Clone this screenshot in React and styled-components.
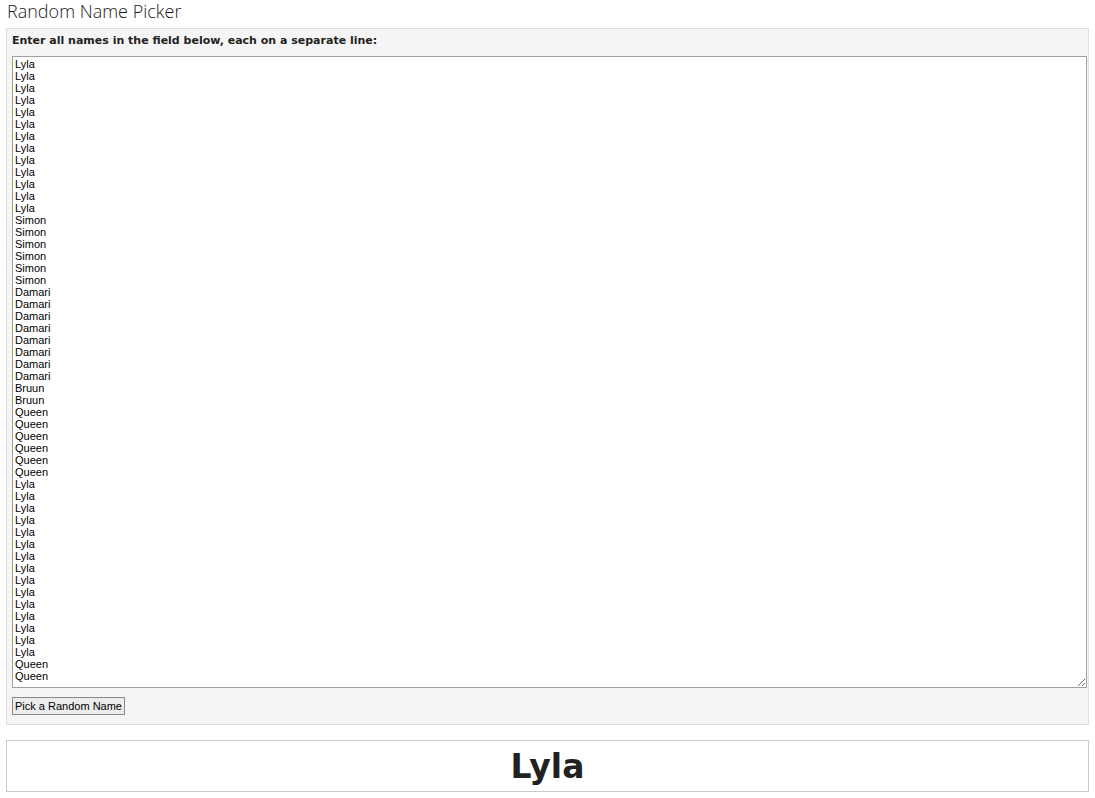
import React, { useState } from 'react';
import styled, { createGlobalStyle } from 'styled-components';

const names = [
    ...Array(13).fill('Lyla'),
    ...Array(6).fill('Simon'),
    ...Array(8).fill('Damari'),
    ...Array(2).fill('Bruun'),
    ...Array(6).fill('Queen'),
    ...Array(15).fill('Lyla'),
    ...Array(2).fill('Queen'),
].join('\n');

const App = () => {
    const [list, setList] = useState(names);
    const [picked, setPicked] = useState('Lyla');

    const pick = () => {
        const all = list.split('\n').map(n => n.trim()).filter(Boolean);
        if (all.length) setPicked(all[Math.floor(Math.random() * all.length)]);
    };

    return (
        <Page>
            <GlobalStyle/>
            <Title>Random Name Picker</Title>

            <Panel>
                <Label htmlFor="names">Enter all names in the field below, each on a separate line:</Label>
                <NameField id="names" value={list} onChange={e => setList(e.target.value)} spellCheck={false}/>
                <PickButton onClick={pick}>Pick a Random Name</PickButton>
            </Panel>

            <Result>{picked}</Result>
        </Page>
    );
};

export default App;

const GlobalStyle = createGlobalStyle`
    body {
        margin:0;
        background:#ffffff;
        font-family:"Liberation Sans", Arial, sans-serif;
    }
`;

const Page = styled.div`
    padding:0 6px;
`;

const Title = styled.h1`
    font-family:"Open Sans", "Noto Sans", sans-serif;
    font-weight:300;
    font-size:18px;
    line-height:22px;
    color:#1a1a1a;
    margin:0 0 6px 1px;
`;

// INPUT PANEL
const Panel = styled.div`
    background:#f5f5f5;
    border:1px solid #dddddd;
    padding:5px 1px 9px 5px;
    display:flex;
    flex-direction:column;
    align-items:flex-start;
`;

const Label = styled.label`
    font-family:"DejaVu Sans", Verdana, sans-serif;
    font-weight:bold;
    font-size:11px;
    line-height:14px;
    color:#222222;
    margin-bottom:8px;
`;

const NameField = styled.textarea`
    box-sizing:border-box;
    width:100%;
    height:632px;
    margin:0;
    padding:1px 2px;
    border:1px solid #a0a0a0;
    font-family:"Liberation Sans", Arial, sans-serif;
    font-size:11px;
    line-height:12px;
    color:#000000;
    background:#ffffff;
    overflow:hidden;
    outline:none;
`;

const PickButton = styled.button`
    margin-top:9px;
    height:18px;
    padding:0 2px;
    font-family:"Liberation Sans", Arial, sans-serif;
    font-size:11px;
    color:#000000;
    background:#ececec;
    border:1px solid #8a8a8a;
    border-radius:0;
    cursor:pointer;
`;

// RESULT
const Result = styled.div`
    margin-top:15px;
    border:1px solid #cccccc;
    height:50px;
    display:flex;
    align-items:center;
    justify-content:center;
    font-family:"DejaVu Sans", Verdana, sans-serif;
    font-weight:bold;
    font-size:33px;
    color:#222222;
`;
